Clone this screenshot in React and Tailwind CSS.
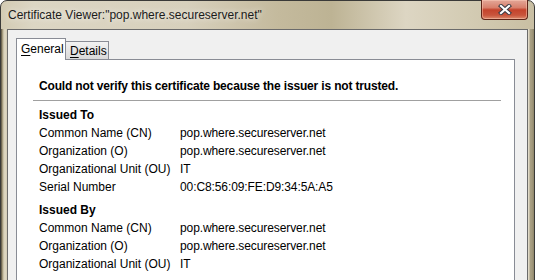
import React from "react";

const issuedTo = [
  ["Common Name (CN)", "pop.where.secureserver.net"],
  ["Organization (O)", "pop.where.secureserver.net"],
  ["Organizational Unit (OU)", "IT"],
  ["Serial Number", "00:C8:56:09:FE:D9:34:5A:A5"],
];

const issuedBy = [
  ["Common Name (CN)", "pop.where.secureserver.net"],
  ["Organization (O)", "pop.where.secureserver.net"],
  ["Organizational Unit (OU)", "IT"],
];

const Section = ({ title, rows, className = "" }) => (
  <div className={`pl-[6px] ${className}`}>
    <div className="h-[18px] leading-[18px] font-bold">{title}</div>
    {rows.map(([label, value]) => (
      <div key={label} className="flex h-[18px] leading-[18px]">
        <div className="w-[141px] shrink-0">{label}</div>
        <div className="tracking-[-0.1px]">{value}</div>
      </div>
    ))}
  </div>
);

const CloseButton = () => (
  <div className="-mt-px w-[47px] h-[20px] rounded-b-[4px] border border-t-0 border-[#5e2418] bg-[linear-gradient(to_bottom,#e3a798_0%,#d8806c_40%,#c4432c_52%,#c9553c_80%,#dc8a6c_100%)] flex items-center justify-center shadow-[inset_0_0_0_1px_rgba(255,210,190,0.45)]">
    <svg width="14" height="11" viewBox="0 0 14 11">
      <path d="M3 2 L11 9 M11 2 L3 9" stroke="#3c3c44" strokeWidth="4.2" strokeLinecap="square" />
      <path d="M3 2 L11 9 M11 2 L3 9" stroke="#ffffff" strokeWidth="2.2" strokeLinecap="square" />
    </svg>
  </div>
);

export default function App() {
  return (
    <div className="w-[535px] h-[280px] overflow-hidden bg-white font-['Liberation_Sans',Arial,sans-serif] text-[12px] text-black">
      <div className="h-[290px] flex flex-col rounded-t-[7px] border border-[#3a3a38] bg-[linear-gradient(to_right,#d3cbb3_0%,#dcd6c4_6%,#d7d0bc_35%,#c4ba9d_52%,#bdb394_62%,#ddd6c3_76%,#d3cbb3_88%,#c9bfa3_100%)]">
        {/* Title bar */}
        <div className="h-[28px] flex items-start justify-between pl-[7px] pr-[6px]">
          <div className="mt-[7px] leading-[15px] text-[#1b1b1b] [text-shadow:0_0_6px_rgba(255,255,255,0.9)]">
            Certificate Viewer:"pop.where.secureserver.net"
          </div>
          <CloseButton />
        </div>

        {/* Frame + client */}
        <div className="flex-1 flex">
          <div className="w-[6px] bg-[linear-gradient(to_right,#4c463a_0px,#8e8468_1px,#b8ae92_2px,#d9d2bc_3px,#ddd6c2_5px,#cfc7b0_6px)]" />
          <div className="flex-1 flex flex-col bg-[#f0f0f0] border-t border-x border-[#6b6b6b] pt-[8px] pl-[8px] pr-[12px]">
            {/* Tabs */}
            <div className="flex items-start relative z-10 -mb-px">
              <div className="w-[50px] h-[22px] bg-white border-t border-x border-[#898c95] pl-[4px] leading-[20px]">
                <span className="underline underline-offset-2">G</span>eneral
              </div>
              <div className="mt-[3px] w-[43px] h-[18px] border-t border-r border-[#898c95] bg-[linear-gradient(to_bottom,#f2f2f2,#e6e6e6_50%,#d9d9d9)] pl-[4px] leading-[18px]">
                <span className="underline underline-offset-2">D</span>etails
              </div>
            </div>

            {/* Panel */}
            <div className="flex-1 bg-white border border-[#898c95] pl-[16px] pr-[13px] pt-[17px]">
              <div className="pl-[6px] h-[18px] leading-[18px] font-bold tracking-[-0.16px]">
                Could not verify this certificate because the issuer is not trusted.
              </div>
              <div className="mt-[5px] h-px bg-[#a0a0a0]" />
              <Section title="Issued To" rows={issuedTo} className="mt-[5px]" />
              <Section title="Issued By" rows={issuedBy} className="mt-[5px]" />
            </div>
          </div>
          <div className="w-[6px] bg-[linear-gradient(to_right,#e2dccb_0px,#ddd6c3_1px,#aaa185_2px,#a39a7e_4px,#8e8569_6px)]" />
        </div>
      </div>
    </div>
  );
}
